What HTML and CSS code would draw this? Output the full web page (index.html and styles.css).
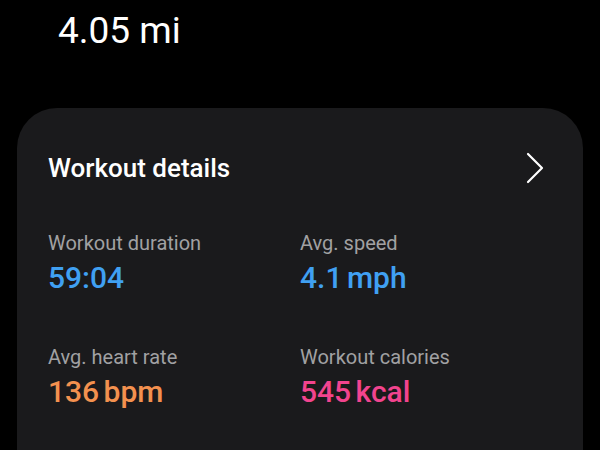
FILE: index.html
```html
<!DOCTYPE html>
<html lang="en">
<head>
    <meta charset="UTF-8">
    <meta name="viewport" content="width=device-width, initial-scale=1.0">
    <title>Workout</title>
    <link rel="stylesheet" href="styles.css">
</head>
<body>
    <div class="distance">4.05 mi</div>

    <div class="card">
        <div class="card-head">
            <h2>Workout details</h2>
            <svg class="chevron" width="20" height="32" viewBox="0 0 20 32">
                <path d="M3 2 L17 16 L3 30" fill="none" stroke="#fff" stroke-width="2.2" stroke-linecap="round" stroke-linejoin="round"/>
            </svg>
        </div>

        <!-- stats grid -->
        <div class="stats">
            <div class="stat">
                <span class="label">Workout duration</span>
                <span class="value blue">59:04</span>
            </div>
            <div class="stat">
                <span class="label">Avg. speed</span>
                <span class="value blue">4.1 mph</span>
            </div>
            <div class="stat">
                <span class="label">Avg. heart rate</span>
                <span class="value orange">136 bpm</span>
            </div>
            <div class="stat">
                <span class="label">Workout calories</span>
                <span class="value pink">545 kcal</span>
            </div>
        </div>
    </div>
</body>
</html>
```

FILE: styles.css
```css
*{
    margin: 0px;
    padding: 0px;
    box-sizing: border-box;
    font-family: Roboto, 'Noto Sans', sans-serif;
}
body{
    background-color: #000;
    color: #fff;
    height: 450px;
    overflow: hidden;
}
.distance{
    padding: 8px 0 0 58px;
    height: 108px;
    font-size: 37px;
    line-height: 46px;
}

/* card */
.card{
    margin: 0 17px;
    height: 342px;
    background-color: #1a1a1c;
    border-radius: 40px 40px 0 0;
    padding: 43px 38px 0 31px;
}
.card-head{
    display: flex;
    flex-direction: row;
    justify-content: space-between;
    align-items: center;
}
.card-head h2{
    font-size: 26px;
    font-weight: 500;
    line-height: 34px;
}
.chevron{
    display: block;
}
.stats{
    display: grid;
    grid-template-columns: 252px 1fr;
    row-gap: 48px;
    margin-top: 46px;
}
.stat{
    display: flex;
    flex-direction: column;
    gap: 4px;
}
.label{
    font-size: 20px;
    line-height: 24px;
    color: #a1a1a3;
}
.value{
    font-size: 30px;
    font-weight: 500;
    line-height: 38px;
    word-spacing: -3px;
}
.blue{
    color: #40a0f2;
}
.orange{
    color: #f3914f;
}
.pink{
    color: #f2448e;
}
```
